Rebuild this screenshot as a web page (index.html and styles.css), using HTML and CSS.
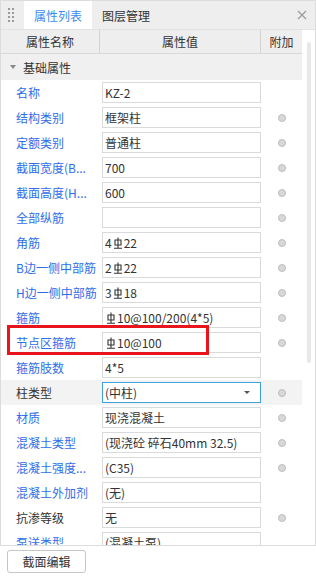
FILE: index.html
```html
<!DOCTYPE html>
<html lang="zh">
<head>
<meta charset="utf-8">
<link rel="stylesheet" href="styles.css">
</head>
<body>
<div class="panel">
  <div class="tabs">
    <div class="grip"><i></i><i></i><i></i><i></i><i></i><i></i><i></i><i></i></div>
    <div class="tab active">属性列表</div>
    <div class="tab">图层管理</div>
    <div class="close">
      <svg width="10" height="10" viewBox="0 0 10 10"><path d="M1 1L9 9M9 1L1 9" stroke="#9a9a9a" stroke-width="1.2"/></svg>
    </div>
  </div>
  <div class="body">
    <div class="table">
      <div class="head">
        <div class="c-name">属性名称</div>
        <div class="c-val">属性值</div>
        <div class="c-add">附加</div>
      </div>
      <div class="group"><span class="tri"></span>基础属性</div>
      <div class="row"><div class="lbl">名称</div><div class="val"><div class="box">KZ-2</div></div><div class="add"></div></div>
      <div class="row"><div class="lbl">结构类别</div><div class="val"><div class="box">框架柱</div></div><div class="add"><span class="dot"></span></div></div>
      <div class="row"><div class="lbl">定额类别</div><div class="val"><div class="box">普通柱</div></div><div class="add"><span class="dot"></span></div></div>
      <div class="row"><div class="lbl">截面宽度(B...</div><div class="val"><div class="box">700</div></div><div class="add"><span class="dot"></span></div></div>
      <div class="row"><div class="lbl">截面高度(H...</div><div class="val"><div class="box">600</div></div><div class="add"><span class="dot"></span></div></div>
      <div class="row"><div class="lbl">全部纵筋</div><div class="val"><div class="box"></div></div><div class="add"><span class="dot"></span></div></div>
      <div class="row"><div class="lbl">角筋</div><div class="val"><div class="box">4<svg class="rb" viewBox="0 0 10 12"><path d="M5 0.5V11M1 11.2H9M2 3H8V8H2Z" stroke="#333" stroke-width="1.1" fill="none"/></svg>22</div></div><div class="add"><span class="dot"></span></div></div>
      <div class="row"><div class="lbl">B边一侧中部筋</div><div class="val"><div class="box">2<svg class="rb" viewBox="0 0 10 12"><path d="M5 0.5V11M1 11.2H9M2 3H8V8H2Z" stroke="#333" stroke-width="1.1" fill="none"/></svg>22</div></div><div class="add"><span class="dot"></span></div></div>
      <div class="row"><div class="lbl">H边一侧中部筋</div><div class="val"><div class="box">3<svg class="rb" viewBox="0 0 10 12"><path d="M5 0.5V11M1 11.2H9M2 3H8V8H2Z" stroke="#333" stroke-width="1.1" fill="none"/></svg>18</div></div><div class="add"><span class="dot"></span></div></div>
      <div class="row"><div class="lbl">箍筋</div><div class="val"><div class="box"><svg class="rb" viewBox="0 0 10 12"><path d="M5 0.5V11M1 11.2H9M2 3H8V8H2Z" stroke="#333" stroke-width="1.1" fill="none"/></svg>10@100/200(4*5)</div></div><div class="add"><span class="dot"></span></div></div>
      <div class="row"><div class="lbl">节点区箍筋</div><div class="val"><div class="box"><svg class="rb" viewBox="0 0 10 12"><path d="M5 0.5V11M1 11.2H9M2 3H8V8H2Z" stroke="#333" stroke-width="1.1" fill="none"/></svg>10@100</div></div><div class="add"><span class="dot"></span></div></div>
      <div class="row"><div class="lbl">箍筋肢数</div><div class="val"><div class="box">4*5</div></div><div class="add"></div></div>
      <div class="row sel"><div class="lbl dark">柱类型</div><div class="val"><div class="box drop">(中柱)<span class="arrow"></span></div></div><div class="add"><span class="dot"></span></div></div>
      <div class="row"><div class="lbl">材质</div><div class="val"><div class="box">现浇混凝土</div></div><div class="add"><span class="dot"></span></div></div>
      <div class="row"><div class="lbl">混凝土类型</div><div class="val"><div class="box">(现浇砼 碎石40mm 32.5)</div></div><div class="add"><span class="dot"></span></div></div>
      <div class="row"><div class="lbl">混凝土强度...</div><div class="val"><div class="box">(C35)</div></div><div class="add"><span class="dot"></span></div></div>
      <div class="row"><div class="lbl">混凝土外加剂</div><div class="val"><div class="box">(无)</div></div><div class="add"></div></div>
      <div class="row"><div class="lbl dark">抗渗等级</div><div class="val"><div class="box">无</div></div><div class="add"><span class="dot"></span></div></div>
      <div class="row"><div class="lbl">泵送类型</div><div class="val"><div class="box">(混凝土泵)</div></div><div class="add"></div></div>
    </div>
    <div class="scroll"><div class="thumb"></div></div>
  </div>
  <div class="mark"></div>
</div>
<div class="footer"><button class="btn">截面编辑</button></div>
</body>
</html>
```
FILE: styles.css
```css
* { box-sizing: border-box; }
html, body { margin: 0; padding: 0; background: #fff; }
body {
  width: 316px; height: 576px; overflow: hidden;
  font-family: "Noto Sans CJK SC", "Noto Sans", sans-serif;
  font-size: 12px; color: #333;
}
.panel {
  position: relative;
  height: 546px;
  border: 1px solid #dcdcdc;
  display: flex; flex-direction: column;
  overflow: hidden;
}
.tabs {
  height: 29px; flex: none;
  background: #eeeeee;
  display: flex; align-items: stretch;
  border-bottom: 1px solid #e2e2e2;
}
.grip {
  width: 23px; display: grid;
  grid-template-columns: 2px 2px; grid-auto-rows: 2px;
  column-gap: 2px; row-gap: 2px;
  align-content: center; justify-content: center;
  padding-right: 4px;
}
.grip i { display: block; background: #9a9a9a; }
.tab {
  padding: 0 10px; display: flex; align-items: center;
  font-size: 12px; color: #333;
}
.tab.active { background: #fff; color: #3b8cf0; width: 68px; justify-content: center; }
.close { margin-left: auto; width: 26px; display: flex; align-items: center; justify-content: center; }
.body { flex: 1; display: flex; overflow: hidden; min-height: 0; }
.table { width: 301px; flex: none; }
.head {
  height: 24px; display: flex; background: #eeeeee;
  border-bottom: 1px solid #d9d9d9;
}
.head > div { display: flex; align-items: center; justify-content: center; color: #333; }
.c-name { width: 99px; border-right: 1px solid #d4d4d4; }
.c-val { width: 161px; border-right: 1px solid #d4d4d4; }
.c-add { width: 41px; }
.group {
  height: 26px; background: #f0f0f0; display: flex; align-items: center;
  padding-left: 9px; color: #333;
}
.tri {
  width: 0; height: 0; border-left: 3px solid transparent; border-right: 3px solid transparent;
  border-top: 4px solid #888; margin-right: 7px;
}
.row { height: 25px; display: flex; align-items: center; }
.row.sel { background: #f3f3f3; }
.lbl { width: 100px; padding-left: 15px; color: #2f6ee8; white-space: nowrap; overflow: hidden; }
.lbl.dark { color: #333; }
.val { width: 160px; padding-left: 1px; }
.box {
  height: 21px; width: 159px; border: 1px solid #dadada; background: #fff;
  display: flex; align-items: center; padding-left: 2px; white-space: nowrap; overflow: hidden;
  color: #333;
}
.rb { width: 10px; height: 12px; margin: 0 1px; flex: none; }
.drop { border-color: #40a0dc; position: relative; }
.arrow {
  margin-left: auto; margin-right: 10px; width: 0; height: 0;
  border-left: 3px solid transparent; border-right: 3px solid transparent; border-top: 3px solid #555;
}
.add { width: 41px; display: flex; justify-content: center; }
.dot {
  width: 8px; height: 8px; border-radius: 50%;
  background: #d8d8d8; border: 1px solid #bdbdbd;
}
.scroll { flex: 1; position: relative; }
.thumb {
  position: absolute; left: 5px; top: 12px; width: 4px; height: 321px;
  border-radius: 2px; background: #e8e8e8;
}
.mark {
  position: absolute; left: 6px; top: 324px; width: 202px; height: 30px;
  border: 3px solid #e8151d;
}
.footer { padding: 4px 0 0 7px; }
.btn {
  width: 79px; height: 23px; border: 1px solid #c6c6c6; border-radius: 3px;
  background: #fff; font: inherit; font-size: 12px; color: #333; padding: 0;
}
```
